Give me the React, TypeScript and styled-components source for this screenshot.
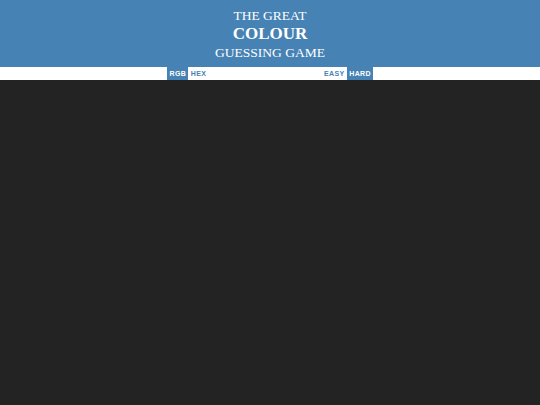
import React, { useState } from 'react';
import styled, { createGlobalStyle } from 'styled-components';

const GlobalStyle = createGlobalStyle`
  html, body {
    margin: 0;
    padding: 0;
    background: #232323;
  }

  body {
    font-family: "Liberation Sans", Arial, sans-serif;
  }
`;

const Header = styled.h1`
  margin: 0;
  height: 67px;
  box-sizing: border-box;
  padding-top: 7px;
  background: steelblue;
  color: #fff;
  text-align: center;
  font-family: "Liberation Serif", "Times New Roman", serif;
  font-weight: 400;
  text-transform: uppercase;
`;

const Line = styled.span<{ $big?: boolean }>`
  display: block;
  font-size: ${(p) => (p.$big ? '17px' : '13.5px')};
  font-weight: ${(p) => (p.$big ? 700 : 400)};
  line-height: ${(p) => (p.$big ? '20px' : '17px')};
`;

const Strip = styled.nav`
  background: #fff;
  height: 13px;
`;

const Bar = styled.div`
  width: 206px;
  height: 100%;
  margin: 0 auto;
  display: flex;
  justify-content: space-between;
`;

const Group = styled.div`
  display: flex;
  height: 100%;
`;

const Toggle = styled.button<{ $active?: boolean }>`
  appearance: none;
  border: 0;
  margin: 0;
  height: 100%;
  padding: 0 2px 0 2.5px;
  background: ${(p) => (p.$active ? 'steelblue' : '#fff')};
  color: ${(p) => (p.$active ? '#fff' : 'steelblue')};
  font-family: "Liberation Sans", Arial, sans-serif;
  font-size: 7px;
  font-weight: 700;
  letter-spacing: 0.4px;
  text-transform: uppercase;
  cursor: pointer;
`;

const Board = styled.main`
  min-height: 325px;
  background: #232323;
`;

export default function App() {
  const [format, setFormat] = useState<'rgb' | 'hex'>('rgb');
  const [level, setLevel] = useState<'easy' | 'hard'>('hard');

  return (
    <>
      <GlobalStyle />
      <Header>
        <Line>The Great</Line>
        <Line $big>Colour</Line>
        <Line>Guessing Game</Line>
      </Header>
      <Strip>
        <Bar>
          <Group>
            <Toggle $active={format === 'rgb'} onClick={() => setFormat('rgb')}>
              RGB
            </Toggle>
            <Toggle $active={format === 'hex'} onClick={() => setFormat('hex')}>
              HEX
            </Toggle>
          </Group>
          <Group>
            <Toggle $active={level === 'easy'} onClick={() => setLevel('easy')}>
              Easy
            </Toggle>
            <Toggle $active={level === 'hard'} onClick={() => setLevel('hard')}>
              Hard
            </Toggle>
          </Group>
        </Bar>
      </Strip>
      <Board />
    </>
  );
}
